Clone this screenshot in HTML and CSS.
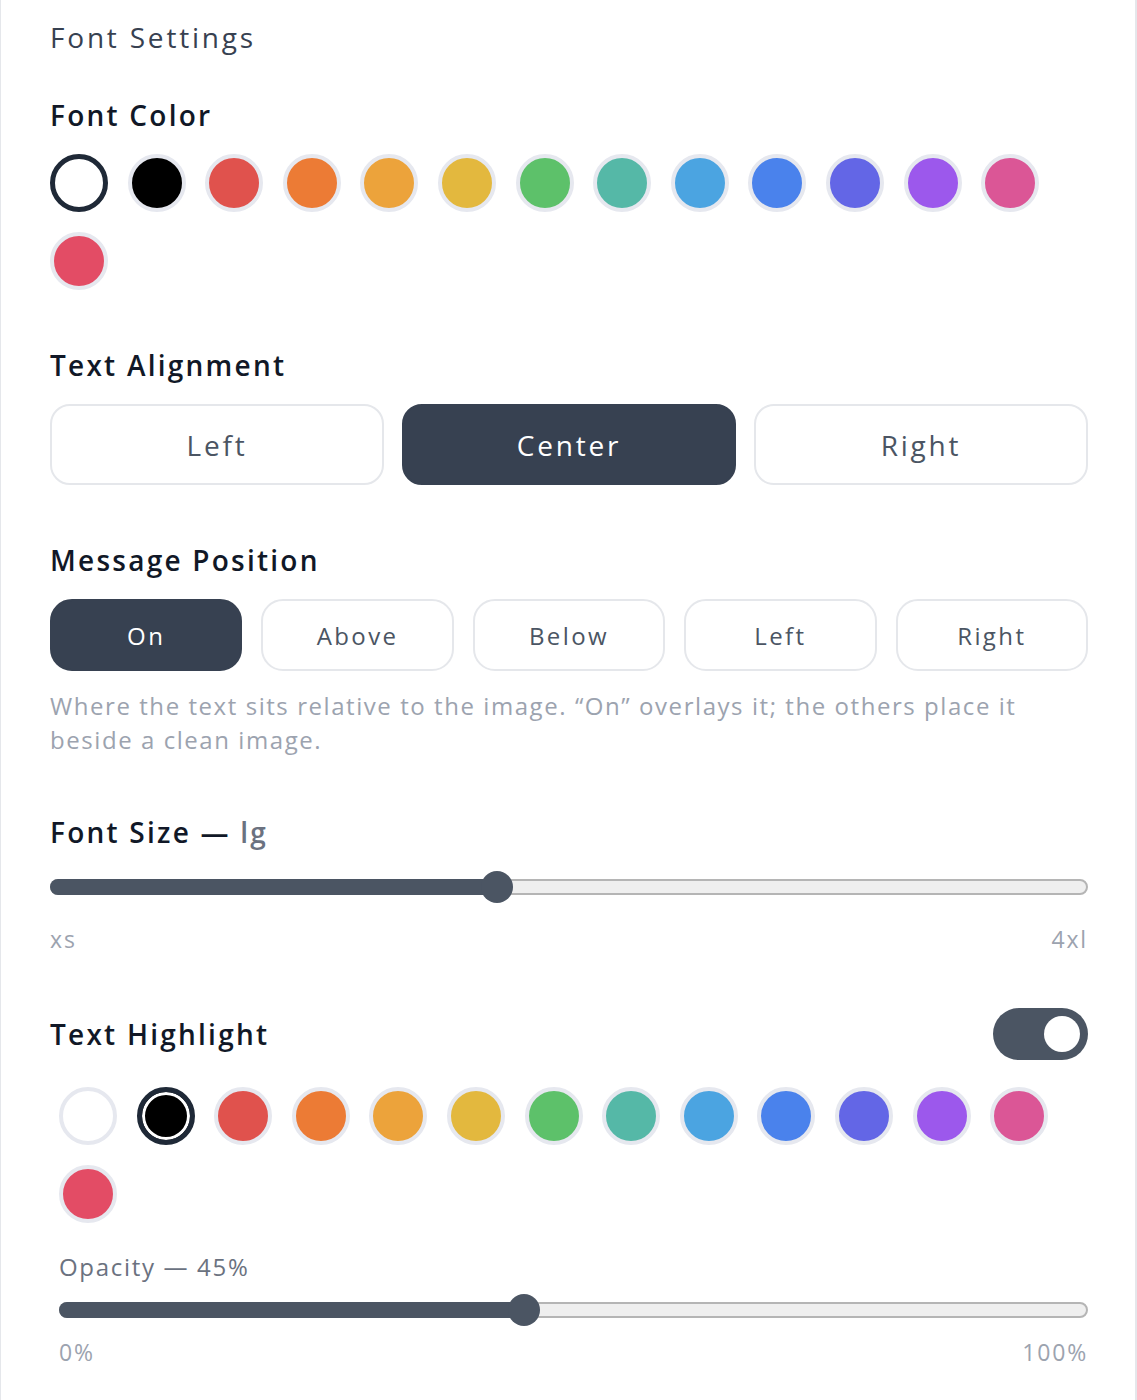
FILE: index.html
```html
<!DOCTYPE html>
<html lang="en">
<head>
  <meta charset="UTF-8">
  <title>Font Settings</title>
  <link rel="stylesheet" href="styles.css">
</head>
<body>

<div class="panel">
  <h1 class="panel-title">Font Settings</h1>

  <section class="section first">
    <h2 class="section-title">Font Color</h2>
    <div class="swatches">
      <button class="swatch selected" style="background:#ffffff"></button>
      <button class="swatch" style="background:#000000"></button>
      <button class="swatch" style="background:#e0524d"></button>
      <button class="swatch" style="background:#ec7b35"></button>
      <button class="swatch" style="background:#eca33b"></button>
      <button class="swatch" style="background:#e3b83e"></button>
      <button class="swatch" style="background:#5dc16a"></button>
      <button class="swatch" style="background:#55b8a7"></button>
      <button class="swatch" style="background:#4ba4e1"></button>
      <button class="swatch" style="background:#4a82ec"></button>
      <button class="swatch" style="background:#6366e6"></button>
      <button class="swatch" style="background:#9c58ec"></button>
      <button class="swatch" style="background:#db5696"></button>
      <button class="swatch" style="background:#e34c65"></button>
    </div>
  </section>

  <section class="section">
    <h2 class="section-title">Text Alignment</h2>
    <div class="options options-3">
      <button class="option">Left</button>
      <button class="option active">Center</button>
      <button class="option">Right</button>
    </div>
  </section>

  <section class="section">
    <h2 class="section-title">Message Position</h2>
    <div class="options options-5">
      <button class="option small active">On</button>
      <button class="option small">Above</button>
      <button class="option small">Below</button>
      <button class="option small">Left</button>
      <button class="option small">Right</button>
    </div>
    <p class="hint">Where the text sits relative to the image. “On” overlays it; the others place it beside a clean image.</p>
  </section>

  <section class="section">
    <h2 class="section-title">Font Size — <span class="value">lg</span></h2>
    <div class="slider">
      <div class="slider-track"></div>
      <div class="slider-fill" style="width: calc(16px + 0.4286 * (100% - 32px))"></div>
      <div class="slider-thumb" style="left: calc(0.4286 * (100% - 32px))"></div>
    </div>
    <div class="slider-labels">
      <span>xs</span>
      <span>4xl</span>
    </div>
  </section>

  <section class="section highlight">
    <div class="section-head">
      <h2 class="section-title">Text Highlight</h2>
      <button class="toggle on"><span class="toggle-knob"></span></button>
    </div>
    <div class="sub">
      <div class="swatches">
        <button class="swatch" style="background:#ffffff"></button>
        <button class="swatch selected-fill" style="background:#000000"></button>
        <button class="swatch" style="background:#e0524d"></button>
        <button class="swatch" style="background:#ec7b35"></button>
        <button class="swatch" style="background:#eca33b"></button>
        <button class="swatch" style="background:#e3b83e"></button>
        <button class="swatch" style="background:#5dc16a"></button>
        <button class="swatch" style="background:#55b8a7"></button>
        <button class="swatch" style="background:#4ba4e1"></button>
        <button class="swatch" style="background:#4a82ec"></button>
        <button class="swatch" style="background:#6366e6"></button>
        <button class="swatch" style="background:#9c58ec"></button>
        <button class="swatch" style="background:#db5696"></button>
        <button class="swatch" style="background:#e34c65"></button>
      </div>
      <div class="sub-label">Opacity — 45%</div>
      <div class="slider">
        <div class="slider-track"></div>
        <div class="slider-fill" style="width: calc(16px + 0.45 * (100% - 32px))"></div>
        <div class="slider-thumb" style="left: calc(0.45 * (100% - 32px))"></div>
      </div>
      <div class="slider-labels">
        <span>0%</span>
        <span>100%</span>
      </div>
    </div>
  </section>
</div>

</body>
</html>
```

FILE: styles.css
```css
* {
  box-sizing: border-box;
}

body {
  margin: 0;
  padding: 0;
  font-family: "Open Sans", "Liberation Sans", sans-serif;
  background: #ffffff;
}

.panel {
  width: 1137px;
  min-height: 1400px;
  padding: 20px 47px 0 49px;
  border-left: 1px solid #e5e7eb;
  border-right: 2px solid #e5e7eb;
}

.panel-title {
  margin: 0;
  font-size: 28px;
  line-height: 34px;
  font-weight: 500;
  letter-spacing: 0.1em;
  color: #374151;
}

.section {
  margin-top: 58px;
}

.section.first {
  margin-top: 44px;
}

.section.highlight {
  margin-top: 54px;
}

.section-title {
  margin: 0 0 22px;
  font-size: 28px;
  line-height: 34px;
  font-weight: 600;
  letter-spacing: 0.08em;
  color: #111827;
}

.section-title .value {
  color: #6b7280;
}

.section-head {
  display: flex;
  align-items: center;
  justify-content: space-between;
  height: 52px;
  margin-bottom: 27px;
}

.section-head .section-title {
  margin: 0;
}

/* swatches */
.swatches {
  display: flex;
  flex-wrap: wrap;
  column-gap: 19.6px;
  row-gap: 20px;
}

.swatch {
  width: 58px;
  height: 58px;
  padding: 0;
  border-radius: 50%;
  border: 4px solid #e6e8ef;
  cursor: pointer;
}

.swatch.selected {
  border: 5px solid #1f2937;
}

.swatch.selected-fill {
  border: 5px solid #1f2937;
  box-shadow: inset 0 0 0 3px #ffffff;
}

/* option buttons */
.options {
  display: grid;
}

.options-3 {
  grid-template-columns: repeat(3, 1fr);
  gap: 18px;
}

.options-5 {
  grid-template-columns: repeat(5, 1fr);
  gap: 19px;
}

.option {
  height: 81px;
  border: 2px solid #e5e7eb;
  border-radius: 20px;
  background: #ffffff;
  font-family: inherit;
  font-size: 28px;
  letter-spacing: 0.1em;
  color: #4b5563;
  cursor: pointer;
}

.option.small {
  height: 72px;
  font-size: 24px;
  border-radius: 22px;
}

.option.active {
  background: #374151;
  border-color: #374151;
  color: #ffffff;
}

.hint {
  margin: 18px 0 0;
  font-size: 24px;
  line-height: 34px;
  letter-spacing: 0.065em;
  color: #9ca3af;
}

/* sliders */
.slider {
  position: relative;
  height: 32px;
}

.slider-track {
  position: absolute;
  left: 0;
  right: 0;
  top: 8px;
  height: 16px;
  border-radius: 8px;
  background: #efefef;
  border: 2px solid #b5b5b5;
}

.slider-fill {
  position: absolute;
  left: 0;
  top: 8px;
  height: 16px;
  border-radius: 8px 0 0 8px;
  background: #4b5563;
}

.slider-thumb {
  position: absolute;
  top: 0;
  width: 32px;
  height: 32px;
  border-radius: 50%;
  background: #4b5563;
}

.slider-labels {
  display: flex;
  justify-content: space-between;
  margin-top: 21px;
  font-size: 23px;
  line-height: 30px;
  letter-spacing: 0.08em;
  color: #9ca3af;
}

/* toggle */
.toggle {
  width: 95px;
  height: 52px;
  padding: 0 8px;
  border: none;
  border-radius: 26px;
  background: #4b5563;
  display: flex;
  align-items: center;
  justify-content: flex-end;
  cursor: pointer;
}

.toggle-knob {
  width: 36px;
  height: 36px;
  border-radius: 50%;
  background: #ffffff;
}

.sub {
  padding-left: 9px;
}

.sub-label {
  margin-top: 27px;
  margin-bottom: 10px;
  font-size: 24px;
  line-height: 34px;
  letter-spacing: 0.07em;
  color: #6b7280;
}

.sub .slider-labels {
  margin-top: 11px;
}
```
